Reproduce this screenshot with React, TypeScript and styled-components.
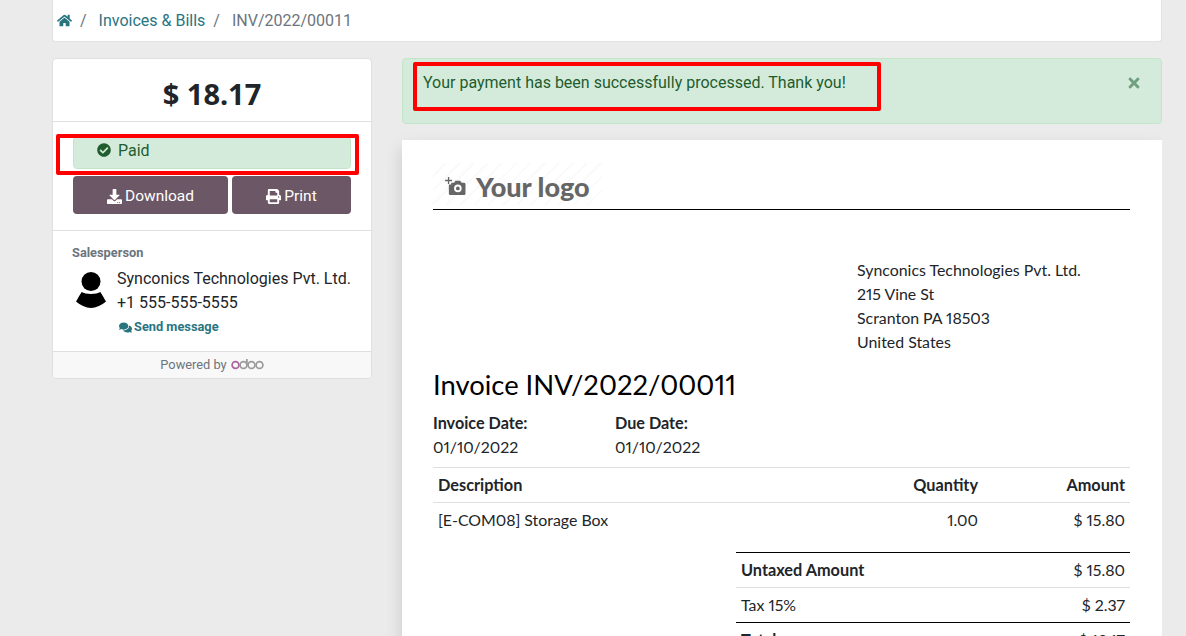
import React, { FC } from 'react';
import styled, { createGlobalStyle } from 'styled-components';
import { FaCheckCircle, FaComments, FaDownload, FaHome, FaPrint, FaTimes } from 'react-icons/fa';

const GlobalStyle = createGlobalStyle`
  html, body {
    margin: 0;
    height: 636px;
    overflow: hidden;
    background: #ebebeb;
    font-family: Roboto, sans-serif;
    font-size: 16px;
    color: #212529;
  }
  * { box-sizing: border-box; }
`;

const Page = styled.div`
  width: 1110px;
  height: 636px;
  margin-left: 52px;
  overflow: hidden;
`;

const Breadcrumb = styled.nav`
  display: flex;
  align-items: center;
  height: 42px;
  padding: 0 5px 0 4px;
  margin-bottom: 16px;
  background: #fff;
  border: 1px solid #e2e2e2;
  border-top: 0;
  border-radius: 0 0 4px 4px;
  font-size: 16px;
  color: #6c757d;
`;

const Crumb = styled.span<{ $link?: boolean }>`
  display: inline-flex;
  align-items: center;
  color: ${({ $link }) => ($link ? '#29757f' : '#6c757d')};
`;

const Slash = styled.span`
  padding: 0 12px 0 8px;
  color: #6c757d;
`;

const Columns = styled.div`
  display: grid;
  grid-template-columns: 320px 760px;
  column-gap: 30px;
  align-items: start;
`;

const Sidebar = styled.aside`
  background: #fff;
  border: 1px solid #dfdfdf;
  border-radius: 4px;
  overflow: hidden;
`;

const Total = styled.div`
  height: 63px;
  display: flex;
  align-items: center;
  justify-content: center;
  border-bottom: 1px solid #dfdfdf;
  font-family: 'Noto Sans', sans-serif;
  font-size: 29px;
  font-weight: 700;
  padding-top: 6px;
`;

const Actions = styled.div`
  padding: 14px 20px 16px;
  border-bottom: 1px solid #dfdfdf;
`;

const Status = styled.div`
  display: flex;
  align-items: center;
  gap: 7px;
  height: 33px;
  margin-bottom: 7px;
  padding: 0 0 5px 23px;
  background: #d4ebdb;
  border: 1px solid #c3e6cb;
  border-radius: 4px;
  color: #1f5c2e;
`;

const ButtonRow = styled.div`
  display: grid;
  grid-template-columns: 155px 119px;
  gap: 4px;
`;

const Button = styled.button`
  display: flex;
  align-items: center;
  justify-content: center;
  gap: 3px;
  height: 38px;
  padding: 2px 0 0;
  border: 0;
  border-radius: 4px;
  background: #6b5766;
  color: #fff;
  font-family: Roboto, sans-serif;
  font-size: 15.500px;
`;

const Contact = styled.section`
  height: 120px;
  padding: 15px 19px 0;
`;

const Label = styled.div`
  font-size: 12.800px;
  font-weight: 700;
  line-height: 14px;
  color: #6c757d;
  margin-bottom: 7px;
`;

const Person = styled.div`
  display: flex;
  gap: 11px;
  padding-left: 4px;
`;

const PersonInfo = styled.div`
  line-height: 24px;
  color: #212529;
`;

const SendMessage = styled.a`
  display: flex;
  align-items: center;
  gap: 2px;
  margin-top: 3px;
  padding-left: 2px;
  font-size: 12.800px;
  line-height: 18px;
  font-weight: 700;
  color: #29757f;
`;

const Powered = styled.footer`
  display: flex;
  align-items: center;
  justify-content: center;
  gap: 4px;
  height: 27px;
  padding-bottom: 2px;
  background: #f8f8f8;
  border-top: 1px solid #dfdfdf;
  font-size: 12.800px;
  color: #6c757d;
`;

const Main = styled.main`
  display: flex;
  flex-direction: column;
  gap: 16px;
`;

const Alert = styled.div`
  display: flex;
  justify-content: space-between;
  height: 66px;
  padding: 15px 19px 0 20px;
  background: #d4ebdb;
  border: 1px solid #c3e6cb;
  border-radius: 4px;
  color: #1f5c2e;
  line-height: 18px;
`;

const Close = styled.span`
  color: #6f9f7f;
  font-size: 16px;
  margin-top: 1px;
`;

const Invoice = styled.article`
  height: 600px;
  padding: 23px 32px 0 31px;
  background: #fff;
  box-shadow: 0 8px 16px rgba(0, 0, 0, 0.15);
  font-family: Lato, sans-serif;
  font-size: 15.900px;
  font-variant-numeric: proportional-nums;
  color: #212529;
`;

const LogoRow = styled.header`
  height: 47px;
  border-bottom: 1px solid #000;
`;

const Logo = styled.div`
  display: flex;
  align-items: center;
  gap: 10px;
  width: 169px;
  height: 42px;
  padding: 4px 0 0 12px;
  background: repeating-linear-gradient(135deg, #fff 0 8px, #fafafa 8px 10px);
  font-family: Lato, sans-serif;
  font-weight: 900;
  font-size: 27px;
  color: #666;
`;

const Address = styled.address`
  margin: 48px 0 0 424px;
  font-style: normal;
  line-height: 24px;
`;

const Title = styled.h2`
  margin: 14px 0 0;
  font-size: 27.400px;
  font-weight: 400;
  line-height: 34px;
  color: #000;
`;

const Meta = styled.div`
  display: grid;
  grid-template-columns: 182px 182px;
  margin-top: 9px;
  line-height: 24px;
`;

const Strong = styled.strong`
  display: block;
  font-size: 16.200px;
  font-weight: 700;
`;

const Row = styled.div<{ $line?: string }>`
  display: grid;
  grid-template-columns: 1fr 140px 147px;
  align-items: center;
  height: 35px;
  padding: 0 5px 2px;
  border-top: 1px solid ${({ $line }) => $line || '#dfdfdf'};
`;

const Lines = styled.div`
  margin-top: 8px;
`;

const Cell = styled.div<{ $bold?: boolean; $right?: boolean }>`
  font-size: ${({ $bold }) => ($bold ? '16.300px' : 'inherit')};
  font-weight: ${({ $bold }) => ($bold ? 700 : 400)};
  text-align: ${({ $right }) => ($right ? 'right' : 'left')};
`;

const Totals = styled.div`
  width: 394px;
  margin: 15px 0 0 auto;
`;

const TotalRow = styled(Row)`
  grid-template-columns: 1fr auto;
`;

const Mark = styled.div`
  position: absolute;
  border: 4px solid #f00;
  border-radius: 2px;
  pointer-events: none;
`;

const PaidMark = styled(Mark)`
  left: 56px;
  top: 134px;
  width: 303px;
  height: 41px;
`;

const AlertMark = styled(Mark)`
  left: 413px;
  top: 62px;
  width: 468px;
  height: 49px;
`;

const AvatarIcon = styled.svg`
  flex: none;
  margin-top: 5px;
`;

const Avatar: FC = () => (
  <AvatarIcon width="30" height="36" viewBox="0 0 30 36">
    <circle cx="15" cy="9.500" r="9.500" fill="#000" />
    <path d="M5.700 20 C9 22.500 21 22.500 24.300 20 C26.500 23 28.500 27 30 29.500 C26 33 20 36 15 36 C10 36 4 33 0 29.500 C1.500 27 3.500 23 5.700 20 Z" fill="#000" />
  </AvatarIcon>
);

const CameraIcon: FC = () => (
  <svg width="21" height="19" viewBox="0 0 22 20">
    <path d="M3 0h1.400v3H7.400v1.400H4.400v3H3v-3H0V3h3z" fill="#666" />
    <path fillRule="evenodd" fill="#666" d="M4 8h2.500V6h3l1.500-2h5l1.500 2h2.500a1.500 1.500 0 0 1 1.500 1.500V17.500a1.500 1.500 0 0 1-1.500 1.500H5.500A1.500 1.500 0 0 1 4 17.500zM13.500 8a4 4 0 1 0 0 8 4 4 0 0 0 0-8zm0 2a2 2 0 1 1 0 4 2 2 0 0 1 0-4z" />
  </svg>
);

const OdooLogo: FC = () => (
  <svg width="33" height="12" viewBox="0 0 33 12" role="img" aria-label="odoo">
    <g fill="none" strokeWidth="1.700">
      <circle cx="4.500" cy="7" r="3.400" stroke="#a9659b" />
      <circle cx="12.500" cy="7" r="3.400" stroke="#9a9a9a" />
      <path d="M15.900 7V1" stroke="#9a9a9a" />
      <circle cx="20.500" cy="7" r="3.400" stroke="#9a9a9a" />
      <circle cx="28.500" cy="7" r="3.400" stroke="#9a9a9a" />
    </g>
  </svg>
);

const App: FC = () => (
  <>
    <GlobalStyle />
    <Page>
      <Breadcrumb>
        <Crumb $link><FaHome size={15} /></Crumb>
        <Slash>/</Slash>
        <Crumb $link>Invoices &amp; Bills</Crumb>
        <Slash>/</Slash>
        <Crumb>INV/2022/00011</Crumb>
      </Breadcrumb>
      <Columns>
        <Sidebar>
          <Total>$ 18.17</Total>
          <Actions>
            <Status><FaCheckCircle size={14} /> Paid</Status>
            <ButtonRow>
              <Button><FaDownload size={15} /> Download</Button>
              <Button><FaPrint size={15} /> Print</Button>
            </ButtonRow>
          </Actions>
          <Contact>
            <Label>Salesperson</Label>
            <Person>
              <Avatar />
              <PersonInfo>
                Synconics Technologies Pvt. Ltd.<br />
                +1 555-555-5555
                <SendMessage><FaComments size={13} /> Send message</SendMessage>
              </PersonInfo>
            </Person>
          </Contact>
          <Powered>Powered by <OdooLogo /></Powered>
        </Sidebar>
        <Main>
          <Alert>
            Your payment has been successfully processed. Thank you!
            <Close><FaTimes /></Close>
          </Alert>
          <Invoice>
            <LogoRow>
              <Logo><CameraIcon /> Your logo</Logo>
            </LogoRow>
            <Address>
              Synconics Technologies Pvt. Ltd.<br />
              215 Vine St<br />
              Scranton PA 18503<br />
              United States
            </Address>
            <Title>Invoice INV/2022/00011</Title>
            <Meta>
              <div><Strong>Invoice Date:</Strong>01/10/2022</div>
              <div><Strong>Due Date:</Strong>01/10/2022</div>
            </Meta>
            <Lines>
              <Row>
                <Cell $bold>Description</Cell>
                <Cell $bold $right>Quantity</Cell>
                <Cell $bold $right>Amount</Cell>
              </Row>
              <Row>
                <Cell>[E-COM08] Storage Box</Cell>
                <Cell $right>1.00</Cell>
                <Cell $right>$ 15.80</Cell>
              </Row>
            </Lines>
            <Totals>
              <TotalRow $line="#000">
                <Cell $bold>Untaxed Amount</Cell>
                <Cell $right>$ 15.80</Cell>
              </TotalRow>
              <TotalRow>
                <Cell>Tax 15%</Cell>
                <Cell $right>$ 2.37</Cell>
              </TotalRow>
              <TotalRow $line="#000">
                <Cell $bold>Total</Cell>
                <Cell $right>$ 18.17</Cell>
              </TotalRow>
            </Totals>
          </Invoice>
        </Main>
      </Columns>
    </Page>
    <PaidMark />
    <AlertMark />
  </>
);

export default App;
